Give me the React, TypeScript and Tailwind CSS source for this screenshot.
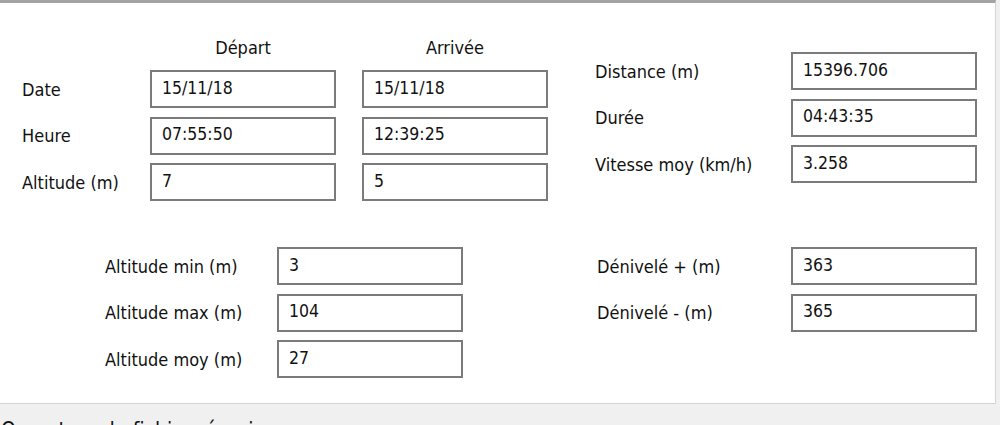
const font = "font-['DejaVu_Sans_Condensed','DejaVu_Sans',sans-serif]";

function Field({ value }: { value: string }) {
  return (
    <div className="w-[186px] h-[38px] border-2 border-[#7b7b7b] bg-white pl-[10px] flex items-center pb-[2px] text-[17.5px] text-[#111]">
      {value}
    </div>
  );
}

function Row({
  label,
  value,
  labelWidth,
}: {
  label: string;
  value: string;
  labelWidth: string;
}) {
  return (
    <div className="flex items-center">
      <div className={`${labelWidth} text-[18px] text-[#111]`}>{label}</div>
      <Field value={value} />
    </div>
  );
}

export default function App() {
  return (
    <div className={`w-[1000px] h-[425px] bg-[#f0f0f0] overflow-hidden ${font}`}>
      {/* main panel */}
      <div className="w-[996px] h-[404px] bg-white border-t-[3px] border-t-[#a3a3a3] border-r border-b border-r-[#d4d4d4] border-b-[#d4d4d4]">
        {/* top section */}
        <div className="flex pt-[33px]">
          <div className="pl-[22px]">
            <div className="flex h-[22px] items-center text-[18px] text-[#111]">
              <div className="w-[128px]" />
              <div className="w-[186px] text-center">Départ</div>
              <div className="w-[26px]" />
              <div className="w-[186px] text-center">Arrivée</div>
            </div>
            <div className="mt-[12px] flex flex-col gap-[8.5px]">
              {[
                ["Date", "15/11/18", "15/11/18"],
                ["Heure", "07:55:50", "12:39:25"],
                ["Altitude (m)", "7", "5"],
              ].map(([l, a, b]) => (
                <div key={l} className="flex items-center">
                  <div className="w-[128px] text-[18px] text-[#111]">{l}</div>
                  <Field value={a} />
                  <div className="w-[26px]" />
                  <Field value={b} />
                </div>
              ))}
            </div>
          </div>
          <div className="ml-[47px] mt-[16px] flex flex-col gap-[8.5px]">
            <Row label="Distance (m)" value="15396.706" labelWidth="w-[196px]" />
            <Row label="Durée" value="04:43:35" labelWidth="w-[196px]" />
            <Row label="Vitesse moy (km/h)" value="3.258" labelWidth="w-[196px]" />
          </div>
        </div>

        {/* bottom section */}
        <div className="flex mt-[46px]">
          <div className="pl-[105px] flex flex-col gap-[8.5px]">
            <Row label="Altitude min (m)" value="3" labelWidth="w-[172px]" />
            <Row label="Altitude max (m)" value="104" labelWidth="w-[172px]" />
            <Row label="Altitude moy (m)" value="27" labelWidth="w-[172px]" />
          </div>
          <div className="ml-[134px] flex flex-col gap-[8.5px]">
            <Row label="Dénivelé + (m)" value="363" labelWidth="w-[194px]" />
            <Row label="Dénivelé - (m)" value="365" labelWidth="w-[194px]" />
          </div>
        </div>
      </div>

      {/* status bar, clipped by the window edge as in the capture */}
      <div className="pt-[11px] pl-[1px] text-[21px] text-[#111] whitespace-nowrap">
        Ouverture du fichier réussie
      </div>
    </div>
  );
}
